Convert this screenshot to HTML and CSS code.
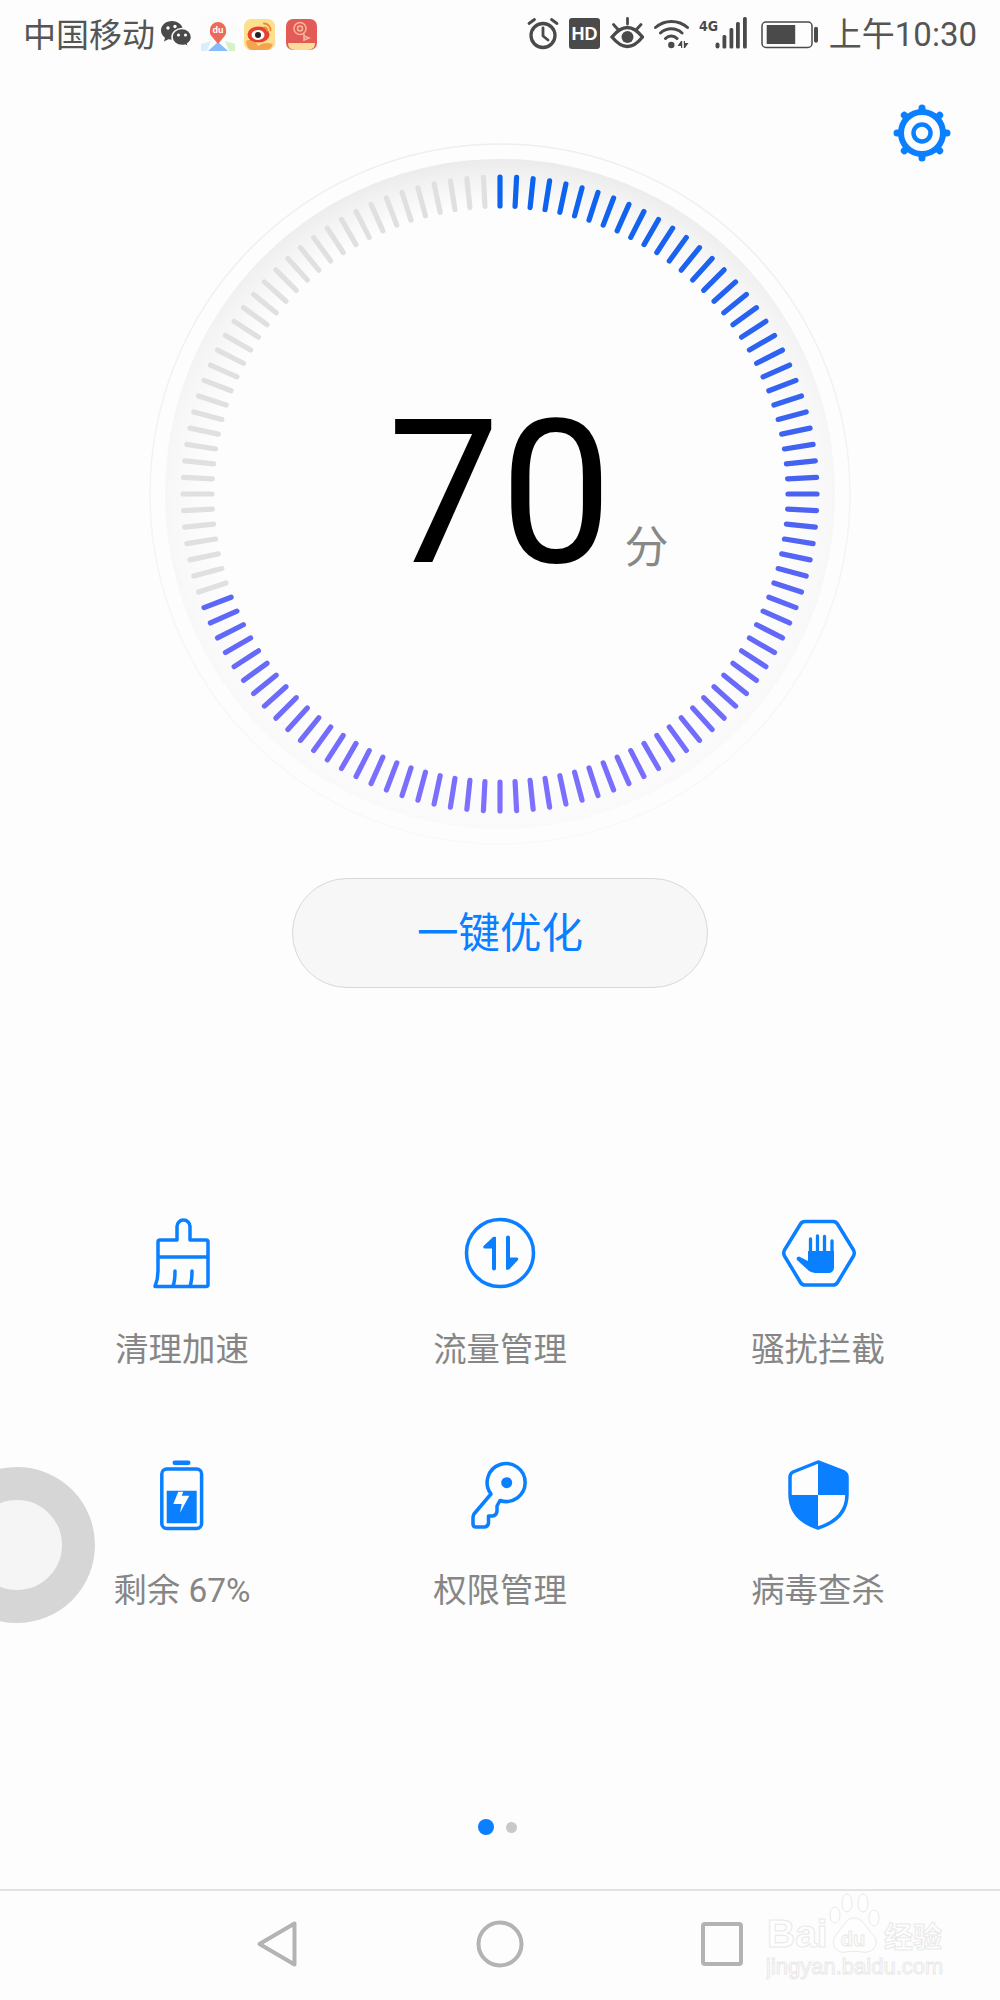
FILE: index.html
```html
<!DOCTYPE html>
<html lang="zh-CN">
<head>
<meta charset="utf-8">
<title>手机管家</title>
<link rel="stylesheet" href="styles.css">
</head>
<body>
<div class="page">
  <header class="status">
    <div class="status-left">
      <span class="carrier">中国移动</span>
      <svg class="ic-wechat" viewBox="0 0 32 34">
        <path fill="#4a4a4a" d="M12 4C5.8 4 1 8.2 1 13.5c0 3 1.6 5.5 4 7.2L4 24.5l4.4-2.2c1.2.3 2.4.5 3.6.5C18.2 22.800 23 18.700 23 13.500S18.200 4 12 4z"/>
        <path fill="#4a4a4a" stroke="#fdfdfd" stroke-width="1.500" d="M22 11.500c-5.500 0-10 3.700-10 8.500s4.500 8.500 10 8.500c1 0 2-.1 3-.4l3.600 2-1-3.300c2.300-1.600 3.900-4 3.900-6.800 0-4.800-4.500-8.500-9.500-8.500z"/>
        <circle cx="8" cy="11" r="1.700" fill="#fdfdfd"/><circle cx="15" cy="9.500" r="1.700" fill="#fdfdfd"/>
        <circle cx="18.500" cy="18" r="1.600" fill="#fdfdfd"/><circle cx="25.500" cy="18" r="1.600" fill="#fdfdfd"/>
      </svg>
      <svg class="ic-tile-map" viewBox="0 0 34 34">
        <rect width="34" height="34" fill="#fbfcfc"/>
        <path fill="#d9eef8" d="M0 34V27L10 24 6 34z"/>
        <path fill="#d8f0c8" d="M34 34V27L24 24 28 34z"/>
        <path fill="#86bcfb" d="M17 25 7 34H27z"/>
        <path fill="#ee6a58" d="M17 27 10 18.500C8.500 16.500 9 14 9 13a8 8 0 0 1 16 0c0 1 .5 3.500-1 5.500z"/>
        <text class="du-mini" x="17" y="16" text-anchor="middle">du</text>
      </svg>
      <svg class="ic-tile" viewBox="0 0 31 31">
        <rect width="31" height="31" rx="7" fill="#fde08e"/>
        <path fill="#f5a34f" d="M2 22Q10 18 14 27 20 22 29 25 27 31 22 31H8Q3 31 2 22z"/>
        <ellipse cx="14.500" cy="15.500" rx="11" ry="8" fill="#e8402f"/>
        <ellipse cx="14" cy="16" rx="6.500" ry="5" fill="#fff"/>
        <circle cx="14" cy="16" r="3" fill="#222"/>
        <path fill="none" stroke="#f08a3a" stroke-width="2" stroke-linecap="round" d="M20 4.500a6.500 6.500 0 0 1 6.500 7M20 8.500a3 3 0 0 1 3 3"/>
      </svg>
      <svg class="ic-tile" viewBox="0 0 31 31">
        <rect width="31" height="31" rx="7" fill="#e25b56"/>
        <path fill="#fbdc9a" d="M2 24H29Q29 31 22 31H9Q2 31 2 24z"/>
        <g fill="none" stroke="#f7b99c" stroke-width="1.500">
          <circle cx="14" cy="9.500" r="6"/><circle cx="14" cy="9.500" r="2.500"/>
          <path d="M18 15V22M18 17l5 2-5 2"/>
        </g>
      </svg>
    </div>
    <div class="status-right">
      <svg class="ic-alarm" viewBox="0 0 32 34" fill="none" stroke="#4a4a4a" stroke-width="3.300" stroke-linecap="round" stroke-linejoin="round">
        <circle cx="16" cy="18.500" r="12"/>
        <path d="M16 11V19L21 23M2 6.500 7.500 2.500M30 6.500 24.500 2.500" stroke-width="2.800"/>
      </svg>
      <svg class="ic-hd" viewBox="0 0 31 34">
        <rect y="1" width="31" height="31" rx="3" fill="#4a4a4a"/>
        <text class="hd-text" x="15.500" y="23" text-anchor="middle">HD</text>
      </svg>
      <svg class="ic-eye" viewBox="0 0 34 34" fill="none" stroke="#4a4a4a" stroke-width="3.300" stroke-linecap="round">
        <path d="M2 20Q17.500 1 32.500 20 17.500 39 2 20z"/>
        <path d="M3.500 7.500 8 12.500M17.500 1.500V7M31 7.500 26.500 12.500" stroke-width="2.800"/>
        <circle cx="17.500" cy="20" r="6" fill="#4a4a4a" stroke="none"/>
      </svg>
      <svg class="ic-wifi" viewBox="0 0 36 34" fill="none" stroke="#4a4a4a" stroke-width="3" stroke-linecap="round">
        <path d="M1.500 10.500a24 24 0 0 1 32 0M6.500 16a16 16 0 0 1 21.500 0M11.500 21.500a8 8 0 0 1 11.500 0"/>
        <circle cx="17.300" cy="28" r="3.200" fill="#4a4a4a" stroke="none"/>
        <path fill="#4a4a4a" stroke="none" d="M27 24v7h1.200v-7zM27 24l-3.500 5H27zM31 31v-7h-1.200v7zM31 31l3.500-5H31z"/>
      </svg>
      <svg class="ic-signal" viewBox="0 0 47 34">
        <text class="net-text" x="-1" y="14">4G</text>
        <g fill="#4a4a4a">
          <rect x="15.500" y="25.500" width="4" height="6" rx="2"/>
          <rect x="22.500" y="18" width="3.800" height="13.500" rx="1.500"/>
          <rect x="29.500" y="11" width="3.800" height="20.500" rx="1.500"/>
          <rect x="36" y="5" width="3.800" height="26.500" rx="1.500"/>
          <rect x="43" y="0" width="3.800" height="31.500" rx="1.500"/>
        </g>
      </svg>
      <svg class="ic-battery" viewBox="0 0 62 34">
        <rect x="5" y="5" width="50" height="25.500" rx="4" fill="none" stroke="#4a4a4a" stroke-width="1.500"/>
        <rect x="9.700" y="8" width="28.500" height="19" fill="#4a4a4a"/>
        <rect x="57" y="9.700" width="4" height="16" rx="2" fill="#4a4a4a"/>
      </svg>
      <span class="clock">上午10:30</span>
    </div>
  </header>

  <main class="home">
    <svg class="gear" viewBox="0 0 60 60">
      <g stroke="#0a7fff" stroke-width="7" stroke-linecap="round">
        <path d="M30 5V55M5 30H55M12.300 12.300 47.700 47.700M47.700 12.300 12.300 47.700"/>
      </g>
      <circle cx="30" cy="30" r="21" fill="#fdfdfd" stroke="#0a7fff" stroke-width="6"/>
      <circle cx="30" cy="30" r="8.500" fill="none" stroke="#0a7fff" stroke-width="4.500"/>
    </svg>

    <section class="dial">
      <svg class="dial-art" id="dial" viewBox="0 0 704 704">
        <defs>
          <linearGradient id="edge" x1="0" y1="0" x2="0" y2="1">
            <stop offset="0" stop-color="#eeeeee"/>
            <stop offset="1" stop-color="#f9f9f9"/>
          </linearGradient>
          <linearGradient id="band" x1="0" y1="0" x2="0" y2="1">
            <stop offset="0" stop-color="#ebebeb"/>
            <stop offset="0.4" stop-color="#f6f6f6"/>
            <stop offset="1" stop-color="#fafafa"/>
          </linearGradient>
          <radialGradient id="fade" cx="0.5" cy="0.5" r="0.5">
            <stop offset="0.86" stop-color="#fdfdfd" stop-opacity="1"/>
            <stop offset="1" stop-color="#fdfdfd" stop-opacity="0"/>
          </radialGradient>
          <linearGradient id="lit" gradientUnits="userSpaceOnUse" x1="0" y1="33" x2="0" y2="671">
            <stop offset="0" stop-color="#0a63ee"/>
            <stop offset="0.5" stop-color="#4a62f2"/>
            <stop offset="1" stop-color="#8070ff"/>
          </linearGradient>
        </defs>
        <circle cx="352" cy="352" r="350" fill="none" stroke="url(#edge)" stroke-width="1.500"/>
        <circle cx="352" cy="352" r="335" fill="url(#band)"/>
        <circle cx="352" cy="352" r="335.500" fill="url(#fade)"/>
        <g id="ticks" stroke-width="5.200" stroke-linecap="round"></g>
      </svg>
      <div class="score"><span class="score-num">70<span class="score-unit">分</span></span></div>
    </section>

    <button class="optimize">一键优化</button>

    <section class="tools">
      <div class="tool">
        <svg class="tool-icon" viewBox="0 0 80 80" fill="none" stroke="#0a7fff" stroke-width="3.500" stroke-linecap="round" stroke-linejoin="round">
          <path d="M18 27H35V13.500a6.500 6.500 0 0 1 13 0V27H64a2 2 0 0 1 2 2V71.500a2 2 0 0 1-2 2H13Q16 66 16 58V29a2 2 0 0 1 2-2zM16 44H66M33 58Q33 68 31 73M50 58Q50 68 48 73"/>
        </svg>
        <span class="tool-label">清理加速</span>
      </div>
      <div class="tool">
        <svg class="tool-icon" viewBox="0 0 80 80">
          <circle cx="40" cy="40" r="33.500" fill="none" stroke="#0a7fff" stroke-width="3.500"/>
          <path fill="#0a7fff" d="M36 24Q33 23 32 25L23.500 33Q22.500 35.500 25 35.500H32V55.500a2 2 0 0 0 4 0zM46 56.500Q49 57.500 50 55.500L58 47Q59 44.500 56.500 44.500H50V24.500a2 2 0 0 0-4 0z"/>
        </svg>
        <span class="tool-label">流量管理</span>
      </div>
      <div class="tool">
        <svg class="tool-icon" viewBox="0 0 80 80">
          <path fill="none" stroke="#0a7fff" stroke-width="3.500" stroke-linejoin="round" d="M27 8.500H55Q58 8.500 59.500 11L75.500 37Q77 40 75.500 43L59.500 69.500Q58 72 55 72H27Q24 72 22.500 69.500L6.500 43Q5 40 6.500 37L22.500 11Q24 8.500 27 8.500z"/>
          <path fill="#0a7fff" d="M30 38H56V54.500a5.500 5.500 0 0 1-5.500 5.500H37Q33 60 30 57L19 47Q17.500 44 21 43.500L30 48z"/>
          <path fill="none" stroke="#0a7fff" stroke-width="3.300" stroke-linecap="round" d="M32.500 26V40M39.500 23V40M46.500 23.500V40M54 28V40"/>
        </svg>
        <span class="tool-label">骚扰拦截</span>
      </div>
      <div class="tool">
        <svg class="tool-icon" viewBox="0 0 80 80">
          <rect x="30.500" y="6.500" width="18" height="4.500" rx="2.200" fill="#0a7fff"/>
          <rect x="19.800" y="15" width="39.800" height="59.500" rx="5" fill="none" stroke="#0a7fff" stroke-width="3.500"/>
          <path fill="#0a7fff" d="M24.700 36.700H54.700V69.300H24.700z"/>
          <path fill="#fdfdfd" d="M36.300 37.700H41.300L39.700 41.700H47.300L38 58.700 39.700 50H31.300z"/>
        </svg>
        <span class="tool-label">剩余 67%</span>
      </div>
      <div class="tool">
        <svg class="tool-icon" viewBox="0 0 80 80">
          <path fill="none" stroke="#0a7fff" stroke-width="3.500" stroke-linejoin="round" d="M31 40 14 60Q13 62 13 64V70Q13 73 16 73H24Q28 73 28.500 69V62H33Q37 61 37 57V52L40 46.500A19 19 0 1 0 31 40z"/>
          <circle cx="46.700" cy="28.700" r="5.500" fill="#0a7fff"/>
        </svg>
        <span class="tool-label">权限管理</span>
      </div>
      <div class="tool">
        <svg class="tool-icon" viewBox="0 0 80 80">
          <path fill="#fdfdfd" stroke="#0a7fff" stroke-width="3.500" stroke-linejoin="round" d="M40 8 66 18Q69 19.500 69 23V40Q69 65 40 74 12 65 12 40V23Q12 19.500 15 18z"/>
          <path fill="#0a7fff" d="M40 8 66 18Q69 19.500 69 23V41H40zM40 41V74Q12 65 12 41z"/>
        </svg>
        <span class="tool-label">病毒查杀</span>
      </div>
    </section>

    <div class="pager"><span class="dot dot-on"></span><span class="dot"></span></div>
  </main>

  <div class="float-ball"></div>

  <nav class="navbar">
    <svg class="nav-icon" viewBox="0 0 60 60" fill="none" stroke="#b3b3b3" stroke-width="4" stroke-linejoin="round">
      <path d="M12.500 30 47.500 9.500V50.500z" class="nav-back"/>
    </svg>
    <svg class="nav-icon" viewBox="0 0 60 60" fill="none" stroke="#b3b3b3" stroke-width="4">
      <circle cx="30" cy="30" r="21.500"/>
    </svg>
    <svg class="nav-icon" viewBox="0 0 60 60" fill="none" stroke="#b3b3b3" stroke-width="4" stroke-linejoin="round">
      <rect x="10" y="10" width="38" height="40" rx="2"/>
    </svg>
    <svg class="watermark" viewBox="0 0 180 88">
      <g class="wm-paw">
        <ellipse cx="81" cy="11" rx="5" ry="9"/>
        <ellipse cx="97" cy="11" rx="5" ry="9"/>
        <ellipse cx="69" cy="23" rx="5" ry="8"/>
        <ellipse cx="108" cy="26" rx="5" ry="8"/>
        <path d="M88 26C80 26 76 36 70 43 64 52 70 62 80 60 85 59 91 59 96 60 107 62 114 52 108 44 101 37 97 26 88 26z"/>
      </g>
      <text class="wm-brand" x="1" y="55">Bai</text>
      <text class="wm-du" x="87" y="54" text-anchor="middle">du</text>
      <text class="wm-cn" x="118" y="56">经验</text>
      <text class="wm-url" x="0" y="82">jingyan.baidu.com</text>
    </svg>
  </nav>
</div>
<script src="app.js"></script>
</body>
</html>
```

FILE: styles.css
```css
* { box-sizing: border-box; }
html, body { margin: 0; padding: 0; background: #fdfdfd; }
.page {
  position: relative;
  width: 1000px;
  height: 2000px;
  overflow: hidden;
  background: #fdfdfd;
  display: flex;
  flex-direction: column;
  font-family: "Roboto", "Noto Sans CJK SC", sans-serif;
}
.status {
  height: 68px;
  display: flex;
  justify-content: space-between;
  align-items: center;
  padding: 0 23px;
  color: #555;
  font-size: 33px;
  flex: none;
}
.status-left, .status-right { display: flex; align-items: center; }
.status-left svg, .status-right svg { display: block; height: 34px; flex: none; }
.carrier { width: 137px; line-height: 40px; padding-top: 3px; }
.ic-wechat { width: 32px; margin-right: 9px; }
.ic-tile-map { width: 34px; margin-right: 9px; }
.status-left .ic-tile { width: 31px; height: 31px; margin-right: 11px; }
.status-right { gap: 10px; }
.ic-alarm { width: 32px; }
.ic-hd { width: 31px; }
.ic-eye { width: 34px; }
.ic-wifi { width: 36px; }
.ic-signal { width: 47px; overflow: visible; }
.ic-battery { width: 62px; }
.clock { line-height: 40px; padding-top: 2px; }
.du-mini { font: 700 9px "Liberation Sans", sans-serif; fill: #fff; }
.hd-text { font: 700 18px "Liberation Sans", sans-serif; fill: #fff; }
.net-text { font: 700 14px "DejaVu Sans Condensed", "Liberation Sans", sans-serif; fill: #4a4a4a; }

.home {
  position: relative;
  flex: 1;
  display: flex;
  flex-direction: column;
  align-items: center;
}
.gear {
  position: absolute;
  top: 35px;
  right: 48px;
  width: 60px;
  height: 60px;
}
.dial {
  position: relative;
  width: 704px;
  height: 704px;
  margin-top: 74px;
  flex: none;
}
.dial-art { display: block; width: 704px; height: 704px; }
.score {
  position: absolute;
  inset: 0;
  display: flex;
  align-items: center;
  justify-content: center;
}
.score-num {
  position: relative;
  font-size: 200px;
  font-weight: 400;
  line-height: 240px;
  color: #000;
}
.score-unit {
  position: absolute;
  left: calc(100% + 12px);
  top: 144px;
  font-size: 44px;
  line-height: 60px;
  color: #888;
  white-space: nowrap;
  font-weight: 400;
}
.optimize {
  width: 416px;
  height: 110px;
  margin-top: 32px;
  flex: none;
  border: 1.500px solid #d8d8d8;
  border-radius: 55px;
  background: #f7f7f7;
  color: #0a7fff;
  font-family: inherit;
  font-size: 41.500px;
  line-height: 56px;
  padding: 2px 0 0;
}
.tools {
  width: 954px;
  margin-top: 225px;
  display: grid;
  grid-template-columns: repeat(3, 318px);
  row-gap: 82px;
  flex: none;
}
.tool { display: flex; flex-direction: column; align-items: center; gap: 35px; }
.tool-icon { display: block; width: 80px; height: 80px; }
.tool-label { font-size: 33.400px; line-height: 44px; color: #868686; white-space: nowrap; }
.pager {
  display: flex;
  align-items: center;
  gap: 12px;
  margin-top: 206px;
  padding-right: 6px;
  height: 16px;
}
.dot { display: block; width: 11px; height: 11px; border-radius: 50%; background: #c9c9c9; }
.dot-on { width: 16px; height: 16px; background: #0a7fff; }
.float-ball {
  position: absolute;
  left: -61px;
  top: 1467px;
  width: 156px;
  height: 156px;
  border-radius: 50%;
  border: 33px solid #d6d6d6;
  background: #f5f5f5;
}
.navbar {
  position: relative;
  height: 111px;
  flex: none;
  border-top: 2px solid #e3e3e3;
  display: flex;
  justify-content: center;
  align-items: center;
  gap: 163px;
  padding-bottom: 3px;
}
.nav-icon { display: block; width: 60px; height: 60px; flex: none; }
.watermark {
  position: absolute;
  left: 766px;
  top: 1px;
  width: 180px;
  height: 88px;
}
.wm-paw, .wm-brand, .wm-du, .wm-cn, .wm-url {
  fill: #fefefe;
  stroke: #e9e9e9;
  stroke-width: 1;
}
.wm-brand { font: 700 39px "Liberation Sans", sans-serif; }
.wm-du { font: 700 20px "Liberation Sans", sans-serif; }
.wm-cn { font: 700 29px "Noto Sans CJK SC", sans-serif; }
.wm-url { font: 400 22px "Liberation Sans", sans-serif; }
```

FILE: app.js
```js
var SVG_NS = "http://www.w3.org/2000/svg";
var ticks = document.getElementById("ticks");
var TOTAL = 120, LIT = 84, CENTER = 352, R_IN = 288, R_OUT = 317;
for (var i = 0; i < TOTAL; i++) {
  var a = (i / TOTAL) * 2 * Math.PI;
  var s = Math.sin(a), c = -Math.cos(a);
  var line = document.createElementNS(SVG_NS, "line");
  line.setAttribute("x1", CENTER + R_IN * s);
  line.setAttribute("y1", CENTER + R_IN * c);
  line.setAttribute("x2", CENTER + R_OUT * s);
  line.setAttribute("y2", CENTER + R_OUT * c);
  line.setAttribute("stroke", i < LIT ? "url(#lit)" : "#e0e0e0");
  ticks.appendChild(line);
}
```
